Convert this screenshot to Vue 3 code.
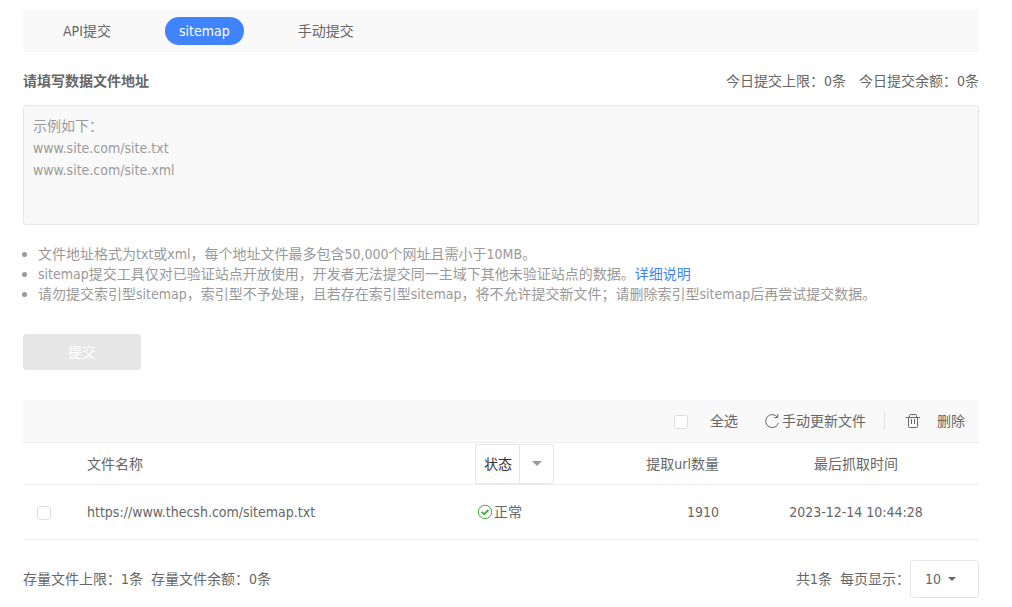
<script setup>
import { ref } from 'vue'

const tabs = ['API提交', 'sitemap', '手动提交']
const activeTab = ref('sitemap')
const urls = ref('')
const placeholder = '示例如下：\nwww.site.com/site.txt\nwww.site.com/site.xml'
const allChecked = ref(false)
const status = ref('状态')
const pageSize = ref('10')
const files = ref([
  { url: 'https://www.thecsh.com/sitemap.txt', status: '正常', count: 1910, time: '2023-12-14 10:44:28', checked: false },
])

function toggleAll() {
  files.value.forEach((f) => { f.checked = allChecked.value })
}
</script>

<template>
  <main class="page" lang="zh-CN">
    <nav class="tabs">
      <button
        v-for="tab in tabs"
        :key="tab"
        type="button"
        class="tab"
        :class="{ active: tab === activeTab }"
        @click="activeTab = tab"
      >{{ tab }}</button>
    </nav>

    <div class="heading">
      <label class="title" for="urls">请填写数据文件地址</label>
      <div class="quota">
        <span>今日提交上限：0条</span>
        <span>今日提交余额：0条</span>
      </div>
    </div>

    <textarea id="urls" v-model="urls" class="urls" :placeholder="placeholder"></textarea>

    <ul class="tips">
      <li>文件地址格式为txt或xml，每个地址文件最多包含50,000个网址且需小于10MB。</li>
      <li>sitemap提交工具仅对已验证站点开放使用，开发者无法提交同一主域下其他未验证站点的数据。<a href="#">详细说明</a></li>
      <li>请勿提交索引型sitemap，索引型不予处理，且若存在索引型sitemap，将不允许提交新文件；请删除索引型sitemap后再尝试提交数据。</li>
    </ul>

    <button type="button" class="submit" disabled>提交</button>

    <div class="toolbar">
      <label class="select-all">
        <input v-model="allChecked" type="checkbox" class="check" @change="toggleAll">
        <span>全选</span>
      </label>
      <button type="button" class="tool refresh">
        <svg width="16" height="16" viewBox="0 0 16 16" fill="none" stroke="currentColor" aria-hidden="true">
          <path d="M13.4 4.2A6.5 6.5 0 1 0 14.4 10" />
          <path d="M13.8 1v3.6h-3.6" />
        </svg>
        <span>手动更新文件</span>
      </button>
      <span class="divider"></span>
      <button type="button" class="tool delete">
        <svg width="14" height="16" viewBox="0 0 14 16" fill="none" stroke="currentColor" aria-hidden="true">
          <path d="M0 4.5h14M3.5 4V2.5q0-1 1-1h5q1 0 1 1V4M2.5 5v8.5q0 1 1 1h7q1 0 1-1V5M5.5 6v5M8.5 6v5" />
        </svg>
        <span>删除</span>
      </button>
    </div>

    <table class="files">
      <colgroup>
        <col class="col-check">
        <col>
        <col class="col-status">
        <col class="col-count">
        <col class="col-time">
      </colgroup>
      <thead>
        <tr>
          <th></th>
          <th>文件名称</th>
          <th>
            <div class="status-filter">
              <select v-model="status" aria-label="状态">
                <option>状态</option>
                <option>正常</option>
              </select>
              <span class="status-arrow"><i class="caret"></i></span>
            </div>
          </th>
          <th class="count">提取url数量</th>
          <th class="time">最后抓取时间</th>
        </tr>
      </thead>
      <tbody>
        <tr v-for="file in files" :key="file.url">
          <td class="pick"><input v-model="file.checked" type="checkbox" class="check" :aria-label="file.url"></td>
          <td>{{ file.url }}</td>
          <td>
            <span class="state">
              <svg width="16" height="16" viewBox="0 0 16 16" fill="none" stroke="currentColor" aria-hidden="true">
                <circle cx="8" cy="8" r="6.7" />
                <path d="M4.6 7.8l2.6 2.4L11.4 6" stroke-width="1.8" />
              </svg>
              <span>{{ file.status }}</span>
            </span>
          </td>
          <td class="count">{{ file.count }}</td>
          <td class="time">{{ file.time }}</td>
        </tr>
      </tbody>
    </table>

    <footer class="footer">
      <div class="summary">
        <span>存量文件上限：1条</span>
        <span>存量文件余额：0条</span>
      </div>
      <div class="pager">
        <span class="total">共1条</span>
        <label for="page-size">每页显示：</label>
        <div class="page-size">
          <select id="page-size" v-model="pageSize">
            <option>10</option>
            <option>20</option>
            <option>50</option>
          </select>
          <i class="caret"></i>
        </div>
      </div>
    </footer>
  </main>
</template>

<style>
body {
  background: #fff;
}
</style>

<style scoped>
.page,
.page * {
  box-sizing: border-box;
}

.page {
  padding: 10px 33px 8px 23px;
  color: #666;
  font: 14px/20px "DejaVu Sans Condensed", "Noto Sans CJK SC", sans-serif;
}

button,
select,
textarea {
  font: inherit;
  color: inherit;
}

button {
  margin: 0;
  padding: 0;
  border: 0;
  background: none;
  white-space: nowrap;
}

.tabs {
  display: flex;
  align-items: center;
  gap: 40px;
  height: 42px;
  padding-left: 26px;
  background: #f9f9f9;
}

.tab {
  height: 28px;
  padding: 0 14px;
  border-radius: 14px;
}

.tab.active {
  background: #4083ff;
  color: #fff;
}

.heading {
  display: flex;
  justify-content: space-between;
  align-items: center;
  height: 53px;
  padding-top: 5px;
}

.title {
  font-weight: 700;
}

.quota {
  display: flex;
  gap: 13px;
}

.urls {
  display: block;
  width: 100%;
  height: 120px;
  padding: 9px;
  border: 1px solid #e6e6e6;
  border-radius: 3px;
  background: #f9f9f9;
  line-height: 22px;
  resize: none;
}

.urls::placeholder {
  color: #999;
  opacity: 1;
}

.tips {
  margin: 19px 0 30px;
  padding: 0;
  list-style: none;
  color: #999;
}

.tips li {
  position: relative;
  padding-left: 15px;
}

.tips li::before {
  position: absolute;
  top: 8px;
  left: -1px;
  width: 5px;
  height: 5px;
  border-radius: 50%;
  background: #999;
  content: "";
}

.tips a {
  color: #4083ff;
  text-decoration: none;
}

.submit {
  display: block;
  width: 118px;
  height: 36px;
  border-radius: 3px;
  background: #e6e6e6;
  color: #fff;
}

.toolbar {
  display: flex;
  justify-content: flex-end;
  align-items: center;
  height: 43px;
  margin-top: 30px;
  padding-right: 14px;
  border-bottom: 1px solid #eee;
  background: #f9f9f9;
}

.check {
  display: block;
  width: 14px;
  height: 14px;
  margin: 2px 0 0;
  border: 1px solid #ddd;
  border-radius: 3px;
  background: #fff;
  appearance: none;
}

.check:checked {
  border-color: #4083ff;
  background: #4083ff;
}

.select-all {
  display: flex;
  align-items: center;
  gap: 22px;
}

.tool {
  display: flex;
  align-items: center;
}

.refresh {
  gap: 2px;
  margin-left: 26px;
}

.delete {
  gap: 17px;
}

.divider {
  width: 1px;
  height: 18px;
  margin: 0 21px 0 18px;
  background: #e0e0e0;
}

.files {
  width: 100%;
  table-layout: fixed;
  border-collapse: separate;
  border-spacing: 0;
}

.col-check {
  width: 64px;
}

.col-status {
  width: 108px;
}

.col-count {
  width: 134px;
}

.col-time {
  width: 260px;
}

.files th,
.files td {
  padding: 0;
  border-bottom: 1px solid #eee;
  font-weight: 400;
  text-align: left;
}

.files th {
  height: 42px;
}

.files td {
  height: 55px;
}

.files .pick {
  padding-left: 14px;
}

.files .count {
  text-align: right;
}

.files .time {
  padding-left: 14px;
  text-align: center;
}

.status-filter,
.page-size {
  position: relative;
  border: 1px solid #e6e6e6;
  border-radius: 3px;
}

.status-filter {
  width: 79px;
  height: 40px;
  margin-left: -2px;
  border-radius: 0 3px 3px 0;
  color: #333;
}

.status-filter select,
.page-size select {
  display: block;
  width: 100%;
  height: 100%;
  margin: 0;
  border: 0;
  background: none;
  appearance: none;
}

.status-filter select {
  padding: 0 34px 0 8px;
}

.status-arrow {
  position: absolute;
  top: 0;
  right: 0;
  bottom: 0;
  display: flex;
  justify-content: center;
  align-items: center;
  width: 34px;
  border-left: 1px solid #e6e6e6;
  color: #999;
  pointer-events: none;
}

.caret {
  border: 4px solid transparent;
  border-top-color: currentColor;
  border-bottom: 0;
}

.status-arrow .caret {
  border-width: 5px 5px 0;
}

.state {
  display: flex;
  align-items: center;
  gap: 1px;
}

.state svg {
  color: #3ead3b;
}

.footer {
  display: flex;
  justify-content: space-between;
  align-items: center;
  margin-top: 20px;
}

.summary,
.pager {
  display: flex;
  align-items: center;
}

.summary {
  gap: 8px;
}

.total {
  margin-right: 8px;
}

.page-size {
  width: 69px;
  height: 38px;
}

.page-size select {
  padding: 0 30px 0 14px;
}

.page-size .caret {
  position: absolute;
  top: 16px;
  right: 22px;
  pointer-events: none;
}
</style>
